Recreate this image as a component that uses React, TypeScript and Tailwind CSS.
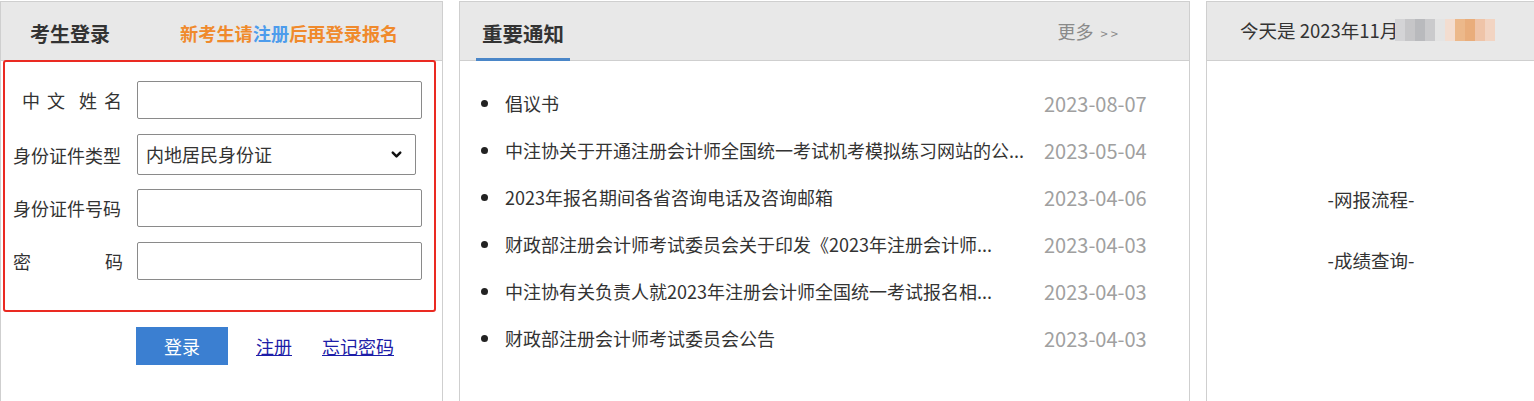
import { ChevronDown } from 'lucide-react';

const font = 'font-["Noto_Sans_CJK_SC","Noto_Sans",sans-serif]';

const news = [
  { title: '倡议书', date: '2023-08-07' },
  { title: '中注协关于开通注册会计师全国统一考试机考模拟练习网站的公...', date: '2023-05-04' },
  { title: '2023年报名期间各省咨询电话及咨询邮箱', date: '2023-04-06' },
  { title: '财政部注册会计师考试委员会关于印发《2023年注册会计师...', date: '2023-04-03' },
  { title: '中注协有关负责人就2023年注册会计师全国统一考试报名相...', date: '2023-04-03' },
  { title: '财政部注册会计师考试委员会公告', date: '2023-04-03' },
];

const mosaic = ['#d4d4d6', '#c6c6c8', '#b9babd', '#cacacc', '#e4e4e4', '#f3ddd0', '#ecb88a', '#e9ad7b', '#efc4a8', '#f2d4c2'];

function Field({ label, children }: { label: React.ReactNode; children: React.ReactNode }) {
  return (
    <div className="flex items-center">
      <div className="w-[118px] pl-[8px] text-[18px] leading-[24px] text-[#333] whitespace-nowrap">{label}</div>
      <div className="ml-[14px]">{children}</div>
    </div>
  );
}

function TextInput() {
  return <input className="w-[285px] h-[38px] border border-[#8a8a8a] rounded-[2px] bg-white outline-none" />;
}

export default function App() {
  return (
    <div className={`${font} w-[1534px] h-[401px] overflow-hidden bg-white pt-px flex gap-[16px]`}>
      {/* 考生登录 */}
      <div className="w-[443px] h-[420px] shrink-0 border border-[#cfcfcf]">
        <div className="h-[59px] bg-[#e8e8e8] border-b border-[#cfcfcf] flex items-center pt-[5px]">
          <span className="ml-[29px] text-[20px] font-bold text-[#333]">考生登录</span>
          <span className="ml-[70px] text-[18.2px] font-bold text-[#f08a2c]">
            新考生请<span className="text-[#4d9cec]">注册</span>后再登录报名
          </span>
        </div>
        <div className="-mt-px ml-[2px] w-[433px] h-[252px] border-2 border-[#ea2a22] rounded-[3px] pt-[19px] flex flex-col">
          <Field
            label={
              <div className="flex pl-[9px]">
                <span>中</span>
                <span className="ml-[7px]">文</span>
                <span className="ml-[14px]">姓</span>
                <span className="ml-[7px]">名</span>
              </div>
            }
          >
            <TextInput />
          </Field>
          <div className="mt-[15px]">
            <Field label="身份证件类型">
              <div className="relative w-[279px] h-[41px] border border-[#8a8a8a] rounded-[2px] bg-white flex items-center">
                <span className="ml-[8px] text-[18px] text-[#333]">内地居民身份证</span>
                <ChevronDown className="absolute right-[11px] top-[12px] w-[15px] h-[15px] text-[#111]" strokeWidth={4} />
              </div>
            </Field>
          </div>
          <div className="mt-[14px]">
            <Field label="身份证件号码">
              <TextInput />
            </Field>
          </div>
          <div className="mt-[15px]">
            <Field
              label={
                <div className="flex justify-between">
                  <span>密</span>
                  <span>码</span>
                </div>
              }
            >
              <TextInput />
            </Field>
          </div>
        </div>
        <div className="mt-[15px] flex items-center">
          <button className="ml-[135px] w-[92px] h-[38px] bg-[#3b7fd1] text-white text-[18px]">登录</button>
          <a className="ml-[28px] text-[18px] text-[#1d1da8] underline">注册</a>
          <a className="ml-[30px] text-[18px] text-[#1d1da8] underline">忘记密码</a>
        </div>
      </div>

      {/* 重要通知 */}
      <div className="w-[731px] h-[420px] shrink-0 border border-[#cfcfcf]">
        <div className="h-[59px] bg-[#e8e8e8] border-b border-[#cfcfcf] flex items-end justify-between">
          <div className="ml-[16px] w-[94px] h-[44px] border-b-[3px] border-[#4a86c8] -mb-px flex justify-center pt-[1px]">
            <span className="text-[20.5px] font-bold text-[#333] leading-[30px]">重要通知</span>
          </div>
          <div className="self-center mr-[68px] flex items-baseline text-[#8a8a8a]">
            <span className="text-[18px]">更多</span>
            <span className="ml-[7px] text-[13px] tracking-[3px]">&gt;&gt;</span>
          </div>
        </div>
        <ul className="pt-[19px]">
          {news.map((n, i) => (
            <li key={i} className="h-[47px] flex items-center">
              <span className="ml-[21px] w-[7px] h-[7px] rounded-full bg-[#222]" />
              <span className="ml-[17px] w-[535px] text-[18px] text-[#333] whitespace-nowrap overflow-hidden">{n.title}</span>
              <span className="ml-[4px] text-[20px] text-[#a0a0a0]">{n.date}</span>
            </li>
          ))}
        </ul>
      </div>

      {/* 日期 */}
      <div className="w-[340px] h-[420px] shrink-0 border border-[#cfcfcf]">
        <div className="h-[59px] bg-[#e8e8e8] border-b border-[#cfcfcf] flex items-center">
          <span className="ml-[33px] text-[18.5px] text-[#333]">今天是 2023年11月</span>
          <div className="flex h-[22px] mt-[-2px] -ml-[3px]">
            {mosaic.map((c, i) => (
              <div key={i} className="w-[10px] h-full" style={{ backgroundColor: c }} />
            ))}
          </div>
        </div>
        <div className="w-[328px] flex flex-col items-center pt-[125px] text-[18.5px] text-[#333]">
          <span>-网报流程-</span>
          <span className="mt-[33px]">-成绩查询-</span>
        </div>
      </div>
    </div>
  );
}
